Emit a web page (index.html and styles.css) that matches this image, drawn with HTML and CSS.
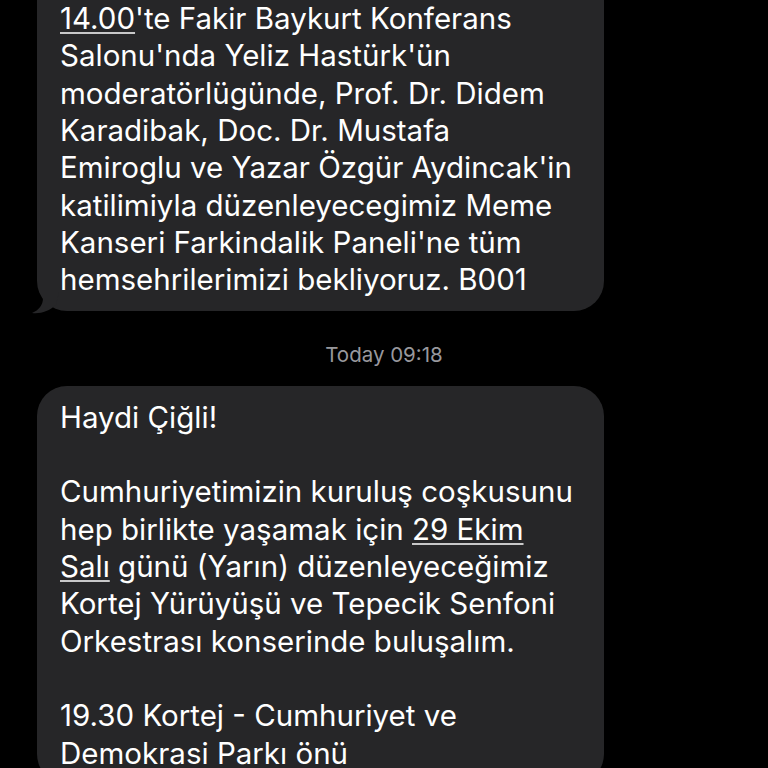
FILE: index.html
```html
<!DOCTYPE html>
<html>
<head>
<meta charset="utf-8">
<link rel="stylesheet" href="styles.css">
</head>
<body>
<div class="thread">
  <div class="bubble first">
    <div class="text"><span class="link">14.00</span>'te Fakir Baykurt Konferans
Salonu'nda Yeliz Hastürk'ün
moderatörlügünde, Prof. Dr. Didem
Karadibak, Doc. Dr. Mustafa
Emiroglu ve Yazar Özgür Aydincak'in
katilimiyla düzenleyecegimiz Meme
Kanseri Farkindalik Paneli'ne tüm
hemsehrilerimizi bekliyoruz. B001</div>
    <svg class="tail" width="30" height="22" viewBox="0 0 30 22"><path d="M14 0 L14 6 C14 13 10 18 3 21 C12 22 20 19 27 13 L30 0 Z" fill="#262628"/></svg>
  </div>
  <div class="stamp">Today 09:18</div>
  <div class="bubble second">
    <div class="text">Haydi Çiğli!

Cumhuriyetimizin kuruluş coşkusunu
hep birlikte yaşamak için <span class="link">29 Ekim</span>
<span class="link">Salı</span> günü (Yarın) düzenleyeceğimiz
Kortej Yürüyüşü ve Tepecik Senfoni
Orkestrası konserinde buluşalım.

19.30 Kortej - Cumhuriyet ve
Demokrasi Parkı önü</div>
  </div>
</div>
</body>
</html>
```
FILE: styles.css
```css
html, body {
  margin: 0;
  padding: 0;
  background: #000;
  height: 768px;
  overflow: hidden;
}
.thread {
  display: flex;
  flex-direction: column;
  align-items: flex-start;
  padding-left: 37px;
  font-family: Inter, "Liberation Sans", Arial, sans-serif;
}
.bubble {
  position: relative;
  width: 567px;
  box-sizing: border-box;
  background: #262628;
  border-radius: 30px;
  padding: 13px 12px 12px 23px;
}
.first {
  margin-top: -60px;
  padding-top: 60px;
  border-top-left-radius: 0;
  border-top-right-radius: 0;
}
.text {
  white-space: pre;
  color: #fff;
  font-size: 29.5px;
  line-height: 37.33px;
}
.link {
  text-decoration: underline;
  text-decoration-color: rgba(255,255,255,0.75);
  text-decoration-thickness: 2px;
  text-underline-offset: 3px;
}
.tail {
  position: absolute;
  left: -8px;
  bottom: -3px;
}
.stamp {
  align-self: stretch;
  margin-right: 37px;
  text-align: center;
  color: #98989d;
  font-size: 20.5px;
  padding: 33px 0 20px;
  line-height: 22px;
}
```
